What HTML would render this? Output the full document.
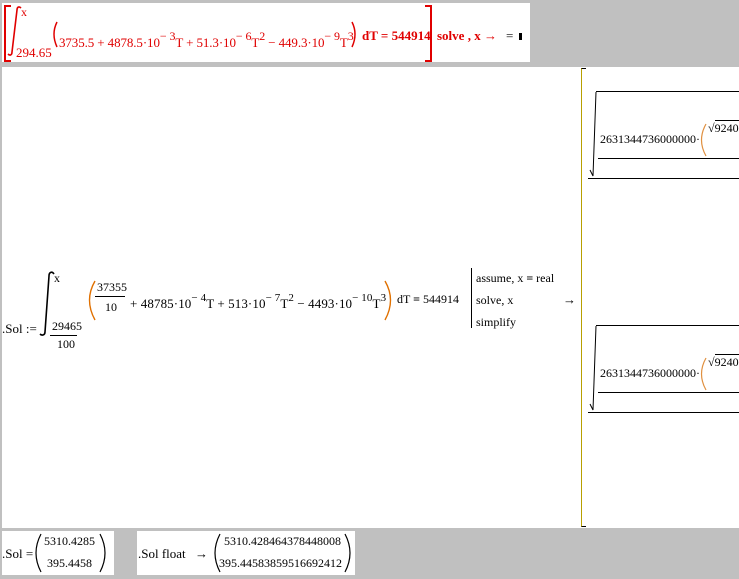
<!DOCTYPE html>
<html><head><style>
body{margin:0;width:739px;height:579px;background:#c0c0c0;position:relative;overflow:hidden;font-family:"Liberation Serif",serif;font-size:13px;color:#000}
.a{position:absolute;white-space:nowrap;line-height:1}
.w{position:absolute;background:#fff}
.r{color:#e00000}
.ln{position:absolute;background:#000}
sup{font-size:11px;vertical-align:7px}
svg{position:absolute;left:0;top:0}
</style></head><body>
<div class="w" style="left:2px;top:3px;width:528px;height:59px"></div>
<div class="w" style="left:2px;top:67px;width:737px;height:461px"></div>
<div class="w" style="left:2px;top:531px;width:112px;height:44px"></div>
<div class="w" style="left:137px;top:531px;width:218px;height:44px"></div>

<svg width="739" height="579" fill="none" stroke-width="1.3">
 <path d="M21,8 c-2,-2 -4,-1 -4,2 L12,52 c0,3 -2,4 -4,2" stroke="#e00000" stroke-width="1.6"/>
 <path d="M57,22 Q51,34 57,47" stroke="#e00000" stroke-width="1.5"/>
 <path d="M352,22 Q358,34 352,47" stroke="#e00000" stroke-width="1.5"/>
 <path d="M54,274 c-2,-3 -5,-2 -5,2 L45,332 c0,3 -3,4 -5,2" stroke="#000" stroke-width="1.6"/>
 <path d="M95,281 Q84,300 95,320" stroke="#e07000" stroke-width="1.4"/>
 <path d="M385,281 Q396,300 385,320" stroke="#e07000" stroke-width="1.4"/>
 <path d="M41,534 Q31,553 41,572" stroke="#000" stroke-width="1.2"/>
 <path d="M100,534 Q110,553 100,572" stroke="#000" stroke-width="1.2"/>
 <path d="M220,534 Q210,553 220,572" stroke="#000" stroke-width="1.2"/>
 <path d="M345,534 Q355,553 345,572" stroke="#000" stroke-width="1.2"/>
 <path d="M706,124 Q697,140 706,156" stroke="#e09040" stroke-width="1.2"/>
 <path d="M706,358 Q697,374 706,390" stroke="#e09040" stroke-width="1.2"/>
 <path d="M590,170 L593,176 L596,92" stroke="#000" stroke-width="1"/>
 <path d="M590,404 L593,410 L596,326" stroke="#000" stroke-width="1"/>
</svg>

<div class="a" style="left:4px;top:5px;width:5px;height:53px;border:2px solid #e00000;border-right:none"></div>
<div class="a" style="left:425px;top:5px;width:5px;height:53px;border:2px solid #e00000;border-left:none"></div>
<div class="a r" style="left:21px;top:6px;font-size:12px">x</div>
<div class="a r" style="left:16px;top:46px;font-size:13px">294.65</div>
<div class="a r" style="left:59px;top:30px;font-size:13px;letter-spacing:-0.1px">3735.5 + 4878.5·10<sup style="font-size:12px">− 3</sup>T + 51.3·10<sup style="font-size:12px">− 6</sup>T<sup style="font-size:12px">2</sup> − 449.3·10<sup style="font-size:12px">− 9</sup>T<sup style="font-size:12px">3</sup></div>
<div class="a r" style="left:362px;top:29px;font-weight:bold;font-size:13px">dT = 544914</div>
<div class="a r" style="left:437px;top:29px;font-weight:bold">solve , x <span style="font-weight:normal">→</span></div>
<div class="a" style="left:506px;top:29px">=</div>
<div class="ln" style="left:519px;top:33px;width:3px;height:7px"></div>

<div class="a" style="left:2px;top:322px">.Sol :=</div>
<div class="a" style="left:54px;top:272px;font-size:12px">x</div>
<div class="a" style="left:52px;top:320px;font-size:12px">29465</div>
<div class="ln" style="left:50px;top:335px;width:27px;height:1px"></div>
<div class="a" style="left:57px;top:338px;font-size:12px">100</div>
<div class="a" style="left:97px;top:281px;font-size:12px">37355</div>
<div class="ln" style="left:95px;top:296px;width:30px;height:1px"></div>
<div class="a" style="left:105px;top:301px;font-size:12px">10</div>
<div class="a" style="left:130px;top:293px;font-size:13px;letter-spacing:0.1px">+ 48785·10<sup>− 4</sup>T + 513·10<sup>− 7</sup>T<sup>2</sup> − 4493·10<sup>− 10</sup>T<sup>3</sup></div>
<div class="a" style="left:397px;top:293px;font-size:12px">dT <b>=</b> 544914</div>
<div class="ln" style="left:471px;top:268px;width:1px;height:60px"></div>
<div class="a" style="left:476px;top:272px;font-size:12px">assume, x <b>=</b> real</div>
<div class="a" style="left:476px;top:294px;font-size:12px">solve, x</div>
<div class="a" style="left:476px;top:316px;font-size:12px">simplify</div>
<div class="a" style="left:563px;top:293px;font-size:13px">→</div>
<div class="a" style="left:581px;top:68px;width:4px;height:457px;border:1px solid #000;border-right:none;border-left-color:#b8a000"></div>

<div class="ln" style="left:596px;top:91px;width:143px;height:1px"></div>
<div class="a" style="left:600px;top:133px;font-size:12px">2631344736000000·</div>
<div class="a" style="left:708px;top:122px;font-size:12px">√<span style="border-top:1px solid #000">9240</span></div>
<div class="ln" style="left:598px;top:158px;width:141px;height:1px"></div>
<div class="ln" style="left:588px;top:178px;width:151px;height:1px"></div>

<div class="ln" style="left:596px;top:325px;width:143px;height:1px"></div>
<div class="a" style="left:600px;top:367px;font-size:12px">2631344736000000·</div>
<div class="a" style="left:708px;top:356px;font-size:12px">√<span style="border-top:1px solid #000">9240</span></div>
<div class="ln" style="left:598px;top:392px;width:141px;height:1px"></div>
<div class="ln" style="left:588px;top:412px;width:151px;height:1px"></div>

<div class="a" style="left:2px;top:547px">.Sol =</div>
<div class="a" style="left:44px;top:535px;font-size:12px">5310.4285</div>
<div class="a" style="left:47px;top:557px;font-size:12px">395.4458</div>
<div class="a" style="left:138px;top:547px">.Sol float</div>
<div class="a" style="left:195px;top:547px">→</div>
<div class="a" style="left:224px;top:535px;font-size:12px">5310.428464378448008</div>
<div class="a" style="left:219px;top:557px;font-size:12px">395.44583859516692412</div>
</body></html>
